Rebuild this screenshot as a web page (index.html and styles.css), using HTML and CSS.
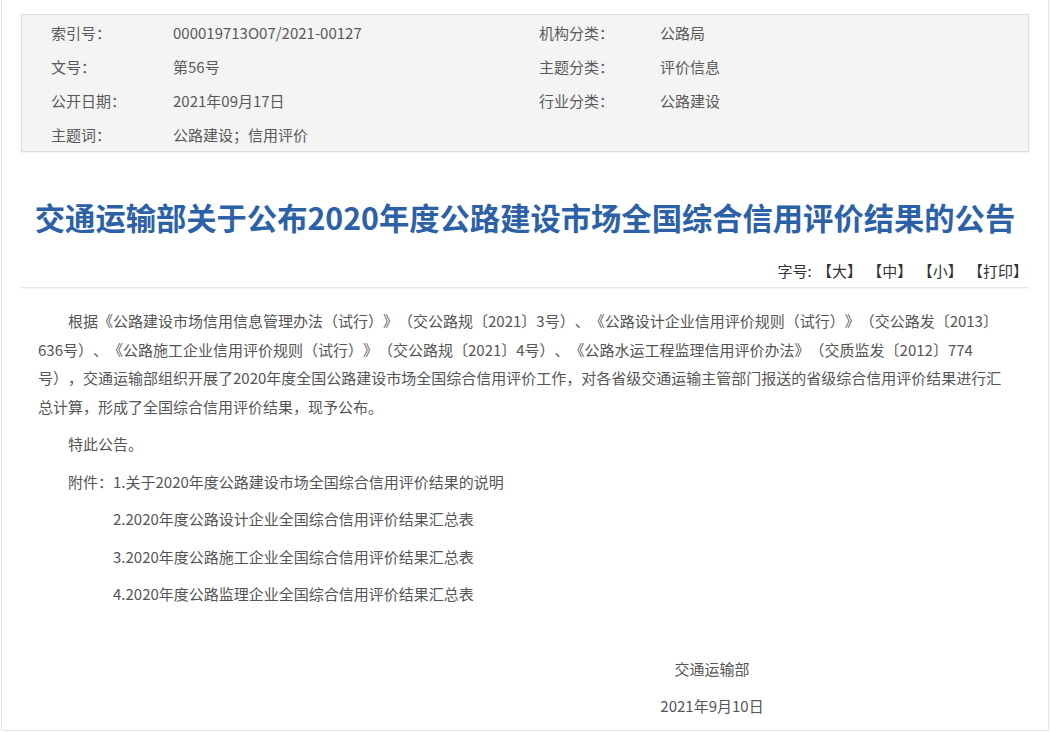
FILE: index.html
```html
<!DOCTYPE html>
<html lang="zh-CN">

<head>
  <meta charset="UTF-8">
  <meta name="viewport" content="width=device-width, initial-scale=1.0">
  <link rel="stylesheet" href="styles.css">
  <title>交通运输部关于公布2020年度公路建设市场全国综合信用评价结果的公告</title>
</head>

<body>
  <div class="page">
    <!-- 信息公开目录 -->
    <div class="meta">
      <span>索引号：</span><span>000019713O07/2021-00127</span>
      <span>机构分类：</span><span>公路局</span>
      <span>文号：</span><span>第56号</span>
      <span>主题分类：</span><span>评价信息</span>
      <span>公开日期：</span><span>2021年09月17日</span>
      <span>行业分类：</span><span>公路建设</span>
      <span>主题词：</span><span>公路建设；信用评价</span>
    </div>

    <h1 class="title">交通运输部关于公布2020年度公路建设市场全国综合信用评价结果的公告</h1>

    <div class="tools">字号: 【大】 【中】 【小】 【打印】</div>

    <div class="content">
      <p>根据《公路建设市场信用信息管理办法（试行）》（交公路规〔2021〕3号）、《公路设计企业信用评价规则（试行）》（交公路发〔2013〕636号）、《公路施工企业信用评价规则（试行）》（交公路规〔2021〕4号）、《公路水运工程监理信用评价办法》（交质监发〔2012〕774号），交通运输部组织开展了2020年度全国公路建设市场全国综合信用评价工作，对各省级交通运输主管部门报送的省级综合信用评价结果进行汇总计算，形成了全国综合信用评价结果，现予公布。</p>
      <p>特此公告。</p>
      <p>附件：1.关于2020年度公路建设市场全国综合信用评价结果的说明</p>
      <p class="attach">2.2020年度公路设计企业全国综合信用评价结果汇总表</p>
      <p class="attach">3.2020年度公路施工企业全国综合信用评价结果汇总表</p>
      <p class="attach">4.2020年度公路监理企业全国综合信用评价结果汇总表</p>

      <div class="sign">
        <p>交通运输部</p>
        <p>2021年9月10日</p>
      </div>
    </div>
  </div>
</body>

</html>
```

FILE: styles.css
```css
body {
  margin: 0;
  font-family: "Noto Sans CJK SC", "Noto Sans", sans-serif;
  background-color: #fff;
  text-spacing-trim: space-all;
}

.page {
  margin: 0 1px;
  height: 731px;
  box-sizing: border-box;
  padding-top: 14px;
  border: 1px solid #e4e4e4;
  border-top: none;
  overflow: hidden;
}

.meta {
  margin: 0 19px;
  padding-left: 29px;
  display: grid;
  grid-template-columns: 122px 366px 121px 1fr;
  grid-auto-rows: 34px;
  align-items: center;
  background-color: #f4f4f4;
  border: 1px solid #dcdcdc;
  box-shadow: 0 1px 2px rgba(0, 0, 0, 0.06);
  font-size: 15px;
  color: #5a5a5a;
}

.title {
  margin: 45px 0 0;
  text-align: center;
  font-size: 30.3px;
  line-height: 40px;
  font-weight: 700;
  color: #2c61a8;
}

.tools {
  margin: 22px 19px 0;
  padding: 0 0 4px 0;
  padding-right: 1px;
  line-height: 24px;
  text-align: right;
  font-size: 15px;
  word-spacing: 2px;
  color: #333;
  border-bottom: 1px solid #e6e6e6;
  box-shadow: 0 1px 1px rgba(0, 0, 0, 0.03);
}

.content {
  padding: 19px 37px 0 36px;
  font-size: 15px;
  color: #555;
}

.content p {
  margin: 0 0 9px;
  line-height: 28.5px;
  text-indent: 2em;
}

.content p.attach {
  text-indent: 5em;
}

.sign {
  width: 200px;
  margin: 46px 199px 0 auto;
  text-align: center;
}

.sign p {
  text-indent: 0;
}
```
